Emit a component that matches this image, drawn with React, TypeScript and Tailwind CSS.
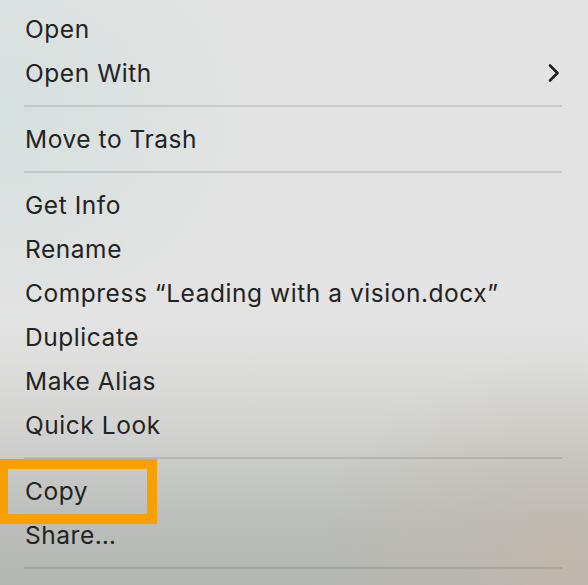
import React from 'react';

type Entry = { label: string; submenu?: boolean } | 'sep';

const entries: Entry[] = [
  { label: 'Open' },
  { label: 'Open With', submenu: true },
  'sep',
  { label: 'Move to Trash' },
  'sep',
  { label: 'Get Info' },
  { label: 'Rename' },
  { label: 'Compress \u201cLeading with a vision.docx\u201d' },
  { label: 'Duplicate' },
  { label: 'Make Alias' },
  { label: 'Quick Look' },
  'sep',
  { label: 'Copy' },
  { label: 'Share\u2026' },
  'sep',
];

function Chevron() {
  return (
    <svg width="14" height="20" viewBox="0 0 14 20" fill="none" className="mr-[27px]">
      <path d="M3 2.5 L10.5 10 L3 17.5" stroke="#1f1f1f" strokeWidth="2.6" strokeLinecap="round" strokeLinejoin="round" />
    </svg>
  );
}

export default function App() {
  return (
    <div className="relative w-[588px] h-[585px] overflow-hidden bg-[radial-gradient(ellipse_260px_220px_at_0px_110px,rgba(200,222,218,0.55),transparent),radial-gradient(ellipse_260px_200px_at_560px_560px,rgba(196,184,170,0.7),transparent),linear-gradient(to_bottom,#e4e4e4_0%,#e3e3e3_55%,#d4d5d2_72%,#bcbfbc_88%,#b3b6b3_100%)] font-['Inter','Liberation_Sans',sans-serif] text-[#232323]">
      <div className="flex flex-col pt-[7px]">
        {entries.map((e, i) =>
          e === 'sep' ? (
            <div key={i} className="py-[10px] pl-[24px] pr-[26px]">
              <div className="h-[2px] bg-black/10" />
            </div>
          ) : (
            <div key={i} className="flex items-center justify-between h-[44px] pl-[25px] text-[24.5px] tracking-[0.55px]">
              <span>{e.label}</span>
              {e.submenu && <Chevron />}
            </div>
          )
        )}
      </div>
      <div className="absolute left-0 top-[459px] w-[157px] h-[65px] border-[10px] border-l-[8px] border-[#f99f00]" />
    </div>
  );
}
